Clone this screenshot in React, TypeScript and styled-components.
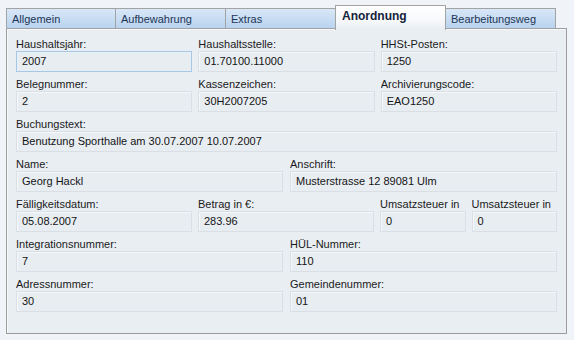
import * as React from "react";
import styled, { createGlobalStyle } from "styled-components";

const GlobalStyle = createGlobalStyle`
  html, body {
    margin: 0;
    padding: 0;
    background: #f0f4f8;
    font-family: "Liberation Sans", Arial, sans-serif;
    font-size: 11px;
  }
`;

interface IField {
  label: string;
  value: string;
  focused?: boolean;
}

interface IRow {
  cols: string;
  gap: number;
  fields: IField[];
}

const tabs = ["Allgemein", "Aufbewahrung", "Extras", "Anordnung", "Bearbeitungsweg"];
const activeTab = "Anordnung";

const rows: IRow[] = [
  {
    cols: "1fr 1fr 1fr",
    gap: 6,
    fields: [
      { label: "Haushaltsjahr:", value: "2007", focused: true },
      { label: "Haushaltsstelle:", value: "01.70100.11000" },
      { label: "HHSt-Posten:", value: "1250" }
    ]
  },
  {
    cols: "1fr 1fr 1fr",
    gap: 6,
    fields: [
      { label: "Belegnummer:", value: "2" },
      { label: "Kassenzeichen:", value: "30H2007205" },
      { label: "Archivierungscode:", value: "EAO1250" }
    ]
  },
  {
    cols: "1fr",
    gap: 0,
    fields: [
      { label: "Buchungstext:", value: "Benutzung Sporthalle am 30.07.2007 10.07.2007" }
    ]
  },
  {
    cols: "1fr 1fr",
    gap: 7,
    fields: [
      { label: "Name:", value: "Georg Hackl" },
      { label: "Anschrift:", value: "Musterstrasse 12 89081 Ulm" }
    ]
  },
  {
    cols: "176px 176px 1fr 1fr",
    gap: 6,
    fields: [
      { label: "Fälligkeitsdatum:", value: "05.08.2007" },
      { label: "Betrag in €:", value: "283.96" },
      { label: "Umsatzsteuer in", value: "0" },
      { label: "Umsatzsteuer in", value: "0" }
    ]
  },
  {
    cols: "1fr 1fr",
    gap: 7,
    fields: [
      { label: "Integrationsnummer:", value: "7" },
      { label: "HÜL-Nummer:", value: "110" }
    ]
  },
  {
    cols: "1fr 1fr",
    gap: 7,
    fields: [
      { label: "Adressnummer:", value: "30" },
      { label: "Gemeindenummer:", value: "01" }
    ]
  }
];

export default function App() {
  return (
    <Wrapper>
      <GlobalStyle />
      <TabBar>
        {tabs.map((t) => (
          <Tab key={t} active={t === activeTab}>
            {t}
          </Tab>
        ))}
      </TabBar>
      <Panel>
        {rows.map((row, i) => (
          <Row key={i} cols={row.cols} gap={row.gap}>
            {row.fields.map((f, j) => (
              <Field key={j}>
                <Label>{f.label}</Label>
                <ValueBox focused={f.focused}>{f.value}</ValueBox>
              </Field>
            ))}
          </Row>
        ))}
      </Panel>
    </Wrapper>
  );
}

const Wrapper = styled.div`
  padding: 5px 0 0 6px;
  width: 561px;
`;

const TabBar = styled.div`
  display: flex;
  align-items: flex-end;
  height: 23px;
`;

const Tab = styled.div<{ active?: boolean }>`
  box-sizing: border-box;
  width: 111px;
  margin-left: -1px;
  &:first-child {
    margin-left: 0;
    width: 110px;
  }
  height: ${(p) => (p.active ? "25px" : "21px")};
  margin-bottom: ${(p) => (p.active ? "-2px" : "-1px")};
  position: relative;
  z-index: ${(p) => (p.active ? 2 : 1)};
  border: 1px solid #a3a3a3;
  border-bottom: ${(p) => (p.active ? "none" : "1px solid #a3a3a3")};
  background: ${(p) =>
    p.active
      ? "linear-gradient(#ffffff, #f6f8fa 60%, #e9eef3)"
      : "linear-gradient(#d8e7f7, #b9d3ef)"};
  color: ${(p) => (p.active ? "#14233a" : "#1d3556")};
  font-weight: ${(p) => (p.active ? "bold" : "normal")};
  font-size: ${(p) => (p.active ? "12px" : "11px")};
  padding: ${(p) => (p.active ? "3px 0 0 6px" : "3px 0 0 5px")};
  line-height: 14px;
  white-space: nowrap;
`;

const Panel = styled.div`
  box-sizing: border-box;
  width: 561px;
  height: 306px;
  border: 1px solid #9c9c9c;
  background: #e9eef3;
  padding: 3px 9px 0 9px;
  box-shadow: inset 1px 1px 0 #f6f8fa;
`;

const Row = styled.div<{ cols: string; gap: number }>`
  display: grid;
  grid-template-columns: ${(p) => p.cols};
  column-gap: ${(p) => p.gap}px;
`;

const Field = styled.div`
  display: flex;
  flex-direction: column;
  min-width: 0;
`;

const Label = styled.div`
  height: 19px;
  display: flex;
  align-items: flex-end;
  line-height: 13px;
  color: #1a1a1a;
  white-space: nowrap;
  overflow: hidden;
`;

const ValueBox = styled.div<{ focused?: boolean }>`
  box-sizing: border-box;
  height: 21px;
  border: 1px solid ${(p) => (p.focused ? "#a7c7e6" : "#d9dfe5")};
  box-shadow: inset 1px 1px 0 ${(p) => (p.focused ? "#e6f0f9" : "#f5f7fa")};
  background: #e8edf2;
  padding: 0 5px;
  line-height: 19px;
  color: #141414;
  white-space: nowrap;
  overflow: hidden;
`;
